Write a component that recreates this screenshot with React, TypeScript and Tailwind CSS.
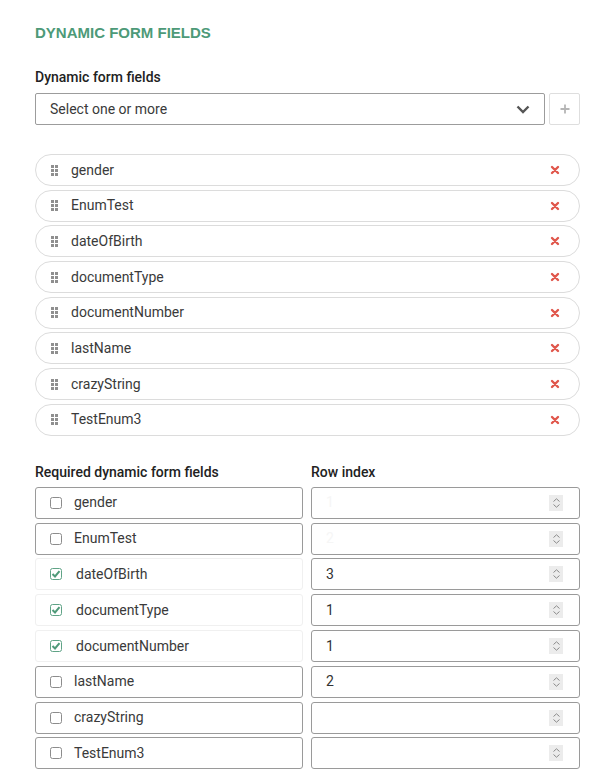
const fields = [
  "gender",
  "EnumTest",
  "dateOfBirth",
  "documentType",
  "documentNumber",
  "lastName",
  "crazyString",
  "TestEnum3",
];

const required = [
  { name: "gender", checked: false, index: "", hint: "1" },
  { name: "EnumTest", checked: false, index: "", hint: "2" },
  { name: "dateOfBirth", checked: true, index: "3", hint: "" },
  { name: "documentType", checked: true, index: "1", hint: "" },
  { name: "documentNumber", checked: true, index: "1", hint: "" },
  { name: "lastName", checked: false, index: "2", hint: "" },
  { name: "crazyString", checked: false, index: "", hint: "" },
  { name: "TestEnum3", checked: false, index: "", hint: "" },
];

function DragHandle() {
  return (
    <svg width="7" height="11" viewBox="0 0 7 11" className="shrink-0">
      {[0, 4, 8].map((y) =>
        [0, 4].map((x) => <rect key={`${x}-${y}`} x={x} y={y} width="3" height="3" fill="#8f8f8f" />)
      )}
    </svg>
  );
}

function RemoveIcon() {
  return (
    <svg width="10" height="10" viewBox="0 0 10 10">
      <path d="M2 2L8 8M8 2L2 8" stroke="#e0574c" strokeWidth="2.4" strokeLinecap="round" />
    </svg>
  );
}

function Checkbox({ checked }: { checked: boolean }) {
  if (checked) {
    return (
      <svg width="12" height="12" viewBox="0 0 12 12" className="shrink-0">
        <rect x="0.5" y="0.5" width="11" height="11" rx="2" fill="#fff" stroke="#5fa386" />
        <path d="M2.5 6L5 8.5L9.5 3.2" fill="none" stroke="#4f9a79" strokeWidth="2" />
      </svg>
    );
  }
  return (
    <svg width="12" height="12" viewBox="0 0 12 12" className="shrink-0">
      <rect x="0.5" y="0.5" width="11" height="11" rx="2" fill="#fff" stroke="#8c8c8c" />
    </svg>
  );
}

function Spinner() {
  return (
    <div className="w-[14px] h-[16px] bg-[#ececec] flex flex-col items-center justify-center gap-[2px]">
      <svg width="7" height="4" viewBox="0 0 7 4">
        <path d="M0.5 3.5L3.5 0.8L6.5 3.5" fill="none" stroke="#8a8a8a" strokeWidth="1" />
      </svg>
      <svg width="7" height="4" viewBox="0 0 7 4">
        <path d="M0.5 0.5L3.5 3.2L6.5 0.5" fill="none" stroke="#8a8a8a" strokeWidth="1" />
      </svg>
    </div>
  );
}

export default function App() {
  return (
    <div className="w-[611px] min-h-[777px] bg-white pl-[35px] pr-[31px] pt-[25px] text-[14px] text-[#333]" style={{ fontFamily: "Roboto, 'Liberation Sans', sans-serif" }}>
      <h1 className="text-[15px] font-bold text-[#4d9a78] leading-[16px]" style={{ fontFamily: "'Liberation Sans', Arial, sans-serif" }}>
        DYNAMIC FORM FIELDS
      </h1>

      <div className="mt-[28px] text-[14px] font-medium text-[#222] leading-[16px]">Dynamic form fields</div>
      <div className="mt-[8px] flex gap-[4px]">
        <div className="flex-1 h-[32px] border border-[#9c9c9c] rounded-[2px] flex items-center justify-between pl-[14px] pr-[14px]">
          <span className="text-[#3a3a3a]">Select one or more</span>
          <svg width="14" height="9" viewBox="0 0 14 9">
            <path d="M1.5 1.5L7 7L12.5 1.5" fill="none" stroke="#555" strokeWidth="2.4" />
          </svg>
        </div>
        <div className="w-[31px] h-[32px] border border-[#dedede] rounded-[2px] flex items-center justify-center">
          <svg width="10" height="10" viewBox="0 0 10 10">
            <path d="M5 0.5V9.5M0.5 5H9.5" stroke="#b5b5b5" strokeWidth="1.8" />
          </svg>
        </div>
      </div>

      <div className="mt-[29px] flex flex-col gap-[3.7px]">
        {fields.map((f) => (
          <div key={f} className="h-[32px] border border-[#dcdcdc] rounded-full flex items-center pl-[15px] pr-[19px]">
            <DragHandle />
            <span className="ml-[13px] flex-1 text-[#3a3a3a]">{f}</span>
            <RemoveIcon />
          </div>
        ))}
      </div>

      <div className="mt-[28px] grid grid-cols-[268px_1fr] gap-x-[8px]">
        <div className="text-[14px] font-medium text-[#222] leading-[16px]">Required dynamic form fields</div>
        <div className="text-[14px] font-medium text-[#222] leading-[16px]">Row index</div>
      </div>
      <div className="mt-[7px] flex flex-col gap-[3.8px]">
        {required.map((r) => (
          <div key={r.name} className="grid grid-cols-[268px_1fr] gap-x-[8px]">
            <div
              className={`h-[32px] rounded-[3px] border flex items-center pl-[14px] ${
                r.checked ? "border-[#f0f0f0]" : "border-[#9a9a9a]"
              }`}
            >
              <Checkbox checked={r.checked} />
              <span className={`${r.checked ? "ml-[14px]" : "ml-[12px]"} text-[#3a3a3a]`}>{r.name}</span>
            </div>
            <div className="h-[32px] rounded-[3px] border border-[#9a9a9a] flex items-center pl-[14px] pr-[16px]">
              <span className={`flex-1 ${r.index ? "text-[#333]" : "text-[#f6f6f6]"}`}>{r.index || r.hint}</span>
              <Spinner />
            </div>
          </div>
        ))}
      </div>
    </div>
  );
}
